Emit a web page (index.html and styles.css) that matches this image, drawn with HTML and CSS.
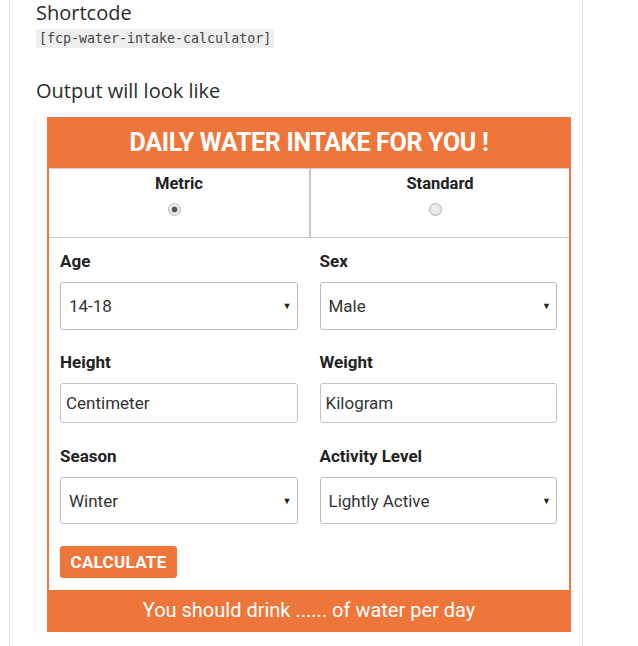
FILE: index.html
```html
<!DOCTYPE html>
<html lang="en">
<head>
<meta charset="utf-8">
<title>Water Intake Calculator</title>
<link rel="stylesheet" href="styles.css">
</head>
<body>
<div class="page">
  <h3 class="sc-title">Shortcode</h3>
  <code class="sc-code">[fcp-water-intake-calculator]</code>
  <h3 class="out-title">Output will look like</h3>
  <div class="preview">
    <div class="widget">
      <div class="w-head">DAILY WATER INTAKE FOR YOU !</div>
      <div class="units">
        <div class="unit">
          <span class="unit-name">Metric</span>
          <span class="radio checked"></span>
        </div>
        <div class="unit">
          <span class="unit-name">Standard</span>
          <span class="radio"></span>
        </div>
      </div>
      <div class="fields">
        <div class="field">
          <div class="label">Age</div>
          <div class="select"><span class="sel-text">14-18</span><span class="arrow">▼</span></div>
        </div>
        <div class="field">
          <div class="label">Sex</div>
          <div class="select"><span class="sel-text">Male</span><span class="arrow">▼</span></div>
        </div>
        <div class="field">
          <div class="label">Height</div>
          <div class="input">Centimeter</div>
        </div>
        <div class="field">
          <div class="label">Weight</div>
          <div class="input">Kilogram</div>
        </div>
        <div class="field field-low">
          <div class="label">Season</div>
          <div class="select"><span class="sel-text">Winter</span><span class="arrow">▼</span></div>
        </div>
        <div class="field field-low">
          <div class="label">Activity Level</div>
          <div class="select"><span class="sel-text">Lightly Active</span><span class="arrow">▼</span></div>
        </div>
      </div>
      <div class="actions">
        <button class="calc">CALCULATE</button>
      </div>
      <div class="w-foot">You should drink ...... of water per day</div>
    </div>
  </div>
</div>
</body>
</html>
```

FILE: styles.css
```css
html, body {
  margin: 0;
  padding: 0;
  background: #fff;
}

.page {
  margin-left: 9px;
  width: 546px;
  min-height: 646px;
  border-left: 1px solid #e8e8e8;
  border-right: 1px solid #e8e8e8;
  padding-left: 26px;
  box-sizing: content-box;
  font-family: "Open Sans", "DejaVu Sans", sans-serif;
  color: #2b2b2b;
}

.sc-title {
  margin: 0;
  font-size: 20px;
  font-weight: 400;
  line-height: 26px;
}

.sc-code {
  display: inline-block;
  margin-top: 3px;
  background: #eeeeee;
  font-family: "DejaVu Sans Mono", "Liberation Mono", monospace;
  font-size: 13.3px;
  line-height: 19px;
  padding: 0 3px;
  color: #444;
}

.out-title {
  margin: 30px 0 0 0;
  font-size: 20px;
  font-weight: 400;
  line-height: 26px;
}

.preview {
  margin: 9px 0 0 -1px;
  width: 532px;
  border-top: 1px solid #f3f3f3;
  border-left: 1px solid #f3f3f3;
  padding: 3px 0 0 11px;
}

.widget {
  width: 524px;
  font-family: Roboto, "Liberation Sans", sans-serif;
  background: #fff;
  border-left: 2px solid #ee763a;
  border-right: 2px solid #ee763a;
  box-sizing: border-box;
}

.w-head {
  background: #ee763a;
  color: #fff;
  font-weight: 700;
  font-size: 25px;
  letter-spacing: -0.3px;
  text-align: center;
  height: 51px;
  line-height: 51px;
  margin: 0 -2px;
}

.units {
  display: grid;
  grid-template-columns: 1fr 1fr;
  border-bottom: 1px solid #c8c8c8;
  border-top: 1px solid #d0d0d0;
}

.unit {
  display: flex;
  flex-direction: column;
  align-items: center;
  height: 68px;
  padding-top: 5px;
  box-sizing: border-box;
}

.unit + .unit {
  border-left: 2px solid #c8c8c8;
}

.unit-name {
  font-weight: 700;
  font-size: 16.5px;
  line-height: 20px;
  color: #222;
}

.radio {
  margin-top: 9px;
  margin-right: 10px;
  width: 11px;
  height: 11px;
  border-radius: 50%;
  border: 1px solid #b5b5b5;
  background: radial-gradient(circle at 50% 40%, #f4f4f4, #d9d9d9);
  box-sizing: content-box;
}

.radio.checked {
  background: radial-gradient(circle, #555 0, #5a5a5a 2.5px, #eaeaea 3.3px, #f2f2f2 100%);
}

.fields {
  display: grid;
  grid-template-columns: 1fr 1fr;
  column-gap: 22px;
  row-gap: 22px;
  padding: 13px 12px 0 11px;
}

.field-low {
  margin-top: 1px;
}

.label {
  font-weight: 700;
  font-size: 17px;
  line-height: 20px;
  color: #222;
  margin-bottom: 11px;
}

.select {
  display: flex;
  align-items: center;
  justify-content: space-between;
  height: 48px;
  border: 1px solid #bdbdbd;
  border-radius: 3px;
  box-sizing: border-box;
  padding: 0 5px 0 8px;
  font-size: 17px;
  color: #333;
}

.field-low .select {
  height: 47px;
}

.arrow {
  font-size: 9px;
  color: #222;
}

.input {
  display: flex;
  align-items: center;
  height: 40px;
  border: 1px solid #c4c4c4;
  border-radius: 3px;
  box-sizing: border-box;
  padding: 0 5px;
  font-size: 17px;
  color: #333;
}

.actions {
  padding: 22px 11px 12px;
}

.calc {
  display: block;
  height: 32px;
  width: 117px;
  background: #ee763a;
  color: #fff;
  border: none;
  border-radius: 3px;
  font-family: Roboto, "Liberation Sans", sans-serif;
  font-weight: 700;
  font-size: 17px;
  letter-spacing: 0.3px;
  padding: 0;
}

.w-foot {
  background: #ee763a;
  color: #fff;
  text-align: center;
  height: 42px;
  line-height: 40px;
  font-size: 20px;
  margin: 0 -2px;
}
```
